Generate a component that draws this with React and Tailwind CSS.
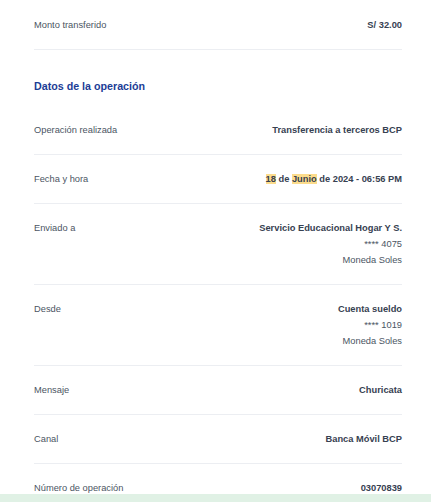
import React from 'react'

const rows = [
  { label: 'Operación realizada', lines: ['Transferencia a terceros BCP'] },
  { label: 'Fecha y hora', date: true },
  { label: 'Enviado a', lines: ['Servicio Educacional Hogar Y S.', '**** 4075', 'Moneda Soles'] },
  { label: 'Desde', lines: ['Cuenta sueldo', '**** 1019', 'Moneda Soles'] },
  { label: 'Mensaje', lines: ['Churicata'] },
  { label: 'Canal', lines: ['Banca Móvil BCP'] },
  { label: 'Número de operación', lines: ['03070839'], last: true },
]

function Row({ row }) {
  return (
    <div className={`flex justify-between py-4 ${row.last ? '' : 'border-b border-[#eceef2]'}`}>
      <span className="text-[#4b5563]">{row.label}</span>
      <div className="flex flex-col items-end text-right">
        {row.date ? (
          <span className="font-bold text-[#374151]">
            <mark className="bg-[#fcdc8c] text-[#374151]">18</mark> de{' '}
            <mark className="bg-[#fcdc8c] text-[#374151]">Junio</mark> de 2024 - 06:56 PM
          </span>
        ) : (
          row.lines.map((line, i) => (
            <span key={i} className={i === 0 ? 'font-bold text-[#374151]' : 'text-[#4b5563]'}>
              {line}
            </span>
          ))
        )}
      </div>
    </div>
  )
}

export default function App() {
  return (
    <div className="relative min-h-screen w-[431px] h-[502px] overflow-hidden bg-white font-['Liberation_Sans',Arial,sans-serif] text-[9.3px] leading-[16px]">
      <div className="ml-[34px] w-[368px] pt-px">
        {/* Monto */}
        <div className="flex justify-between py-4 border-b border-[#eceef2]">
          <span className="text-[#4b5563]">Monto transferido</span>
          <span className="font-bold text-[#374151]">S/ 32.00</span>
        </div>

        {/* Heading */}
        <h2 className="pt-[28px] pb-[12px] text-[10.7px] font-bold text-[#1c3d96] leading-[16px]">
          Datos de la operación
        </h2>

        {rows.map((row) => (
          <Row key={row.label} row={row} />
        ))}
      </div>
      {/* bottom bar peeking in */}
      <div className="absolute bottom-0 left-0 right-0 h-[8px] bg-[#e0f1e5]" />
    </div>
  )
}
